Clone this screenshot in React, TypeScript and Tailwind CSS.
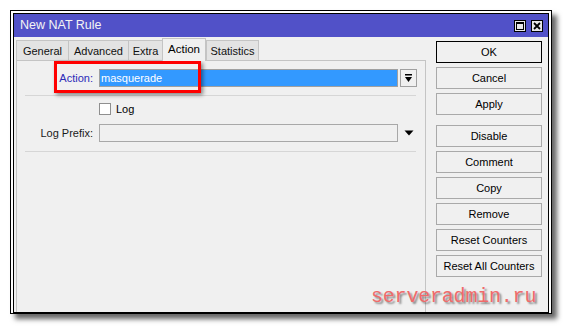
import React from "react";

const tabs = [
  { name: "General", w: 53 },
  { name: "Advanced", w: 61 },
  { name: "Extra", w: 35 },
  { name: "Action", w: 44, active: true },
  { name: "Statistics", w: 53 },
];

function Btn({ label, def, className = "" }: { label: string; def?: boolean; className?: string }) {
  return (
    <div
      className={
        "h-[22px] w-full flex items-center justify-center bg-[#f0f0f0] text-black " +
        (def ? "border border-black" : "border border-[#a9a9a9]") +
        " " +
        className
      }
    >
      {label}
    </div>
  );
}

export default function App() {
  return (
    <div
      className="relative w-[563px] h-[326px] bg-white overflow-hidden text-[11px] leading-none"
      style={{ fontFamily: '"Liberation Sans", Arial, sans-serif' }}
    >
      <div className="ml-[10px] mt-[10px] w-[542px] h-[304px] border border-black bg-white pt-[2px] px-[2px] flex flex-col shadow-[5px_5px_5px_rgba(0,0,0,0.6)]">
        <div className="flex-1 border border-black bg-[#f0f0f0] flex flex-col">
          {/* Title bar */}
          <div className="h-[23px] bg-[#5151c8] flex items-center pl-[6px] pr-[5px]">
            <span className="text-[#f4f4f4] text-[12.5px]">New NAT Rule</span>
            <div className="ml-auto flex gap-[5px]">
              <div className="w-[12px] h-[12px] border border-black bg-[#e8e8e8] flex items-center justify-center">
                <svg width="8" height="8" viewBox="0 0 8 8">
                  <rect x="0.5" y="0.5" width="7" height="7" fill="none" stroke="black" strokeWidth="1" />
                  <rect x="0" y="0" width="8" height="2" fill="black" />
                </svg>
              </div>
              <div className="w-[12px] h-[12px] border border-black bg-[#e8e8e8] flex items-center justify-center">
                <svg width="8" height="8" viewBox="0 0 8 8">
                  <path d="M1 1 L7 7 M7 1 L1 7" stroke="black" strokeWidth="1.8" />
                </svg>
              </div>
            </div>
          </div>
          {/* Body */}
          <div className="flex-1 flex">
            <div className="w-[412px] pl-[2px] flex flex-col">
              <div className="h-[23px] flex items-end">
                {tabs.map((t) =>
                  t.active ? (
                    <div
                      key={t.name}
                      style={{ width: t.w }}
                      className="h-[23px] -mb-px relative z-10 bg-[#f0f0f0] border-l border-r border-t border-[#c4c4c4] flex items-center justify-center text-black text-[11.5px] pb-[1px]"
                    >
                      {t.name}
                    </div>
                  ) : (
                    <div
                      key={t.name}
                      style={{ width: t.w }}
                      className="h-[20px] bg-[#e3e3e3] border-l border-t border-r border-[#c4c4c4] -mr-px flex items-center justify-center text-[#111] text-[11px] pt-[2px]"
                    >
                      {t.name}
                    </div>
                  )
                )}
              </div>
              <div className="flex-1 border-l border-t border-r border-[#c4c4c4] flex flex-col pt-[8px]">
                {/* Action row */}
                <div className="h-[18px] flex items-center">
                  <div className="w-[76px] text-right text-[#2b2bb8]">Action:</div>
                  <div className="ml-[6px] w-[299px] h-[18px] bg-[#3399ff] border border-[#a0a0a0] flex items-center pl-[1px] text-white">
                    masquerade
                  </div>
                  <div className="ml-[2px] w-[17px] h-[18px] border border-[#a0a0a0] bg-[#f0f0f0] flex items-center justify-center">
                    <svg width="9" height="9" viewBox="0 0 9 9">
                      <rect x="1" y="0" width="7" height="1.5" fill="black" />
                      <path d="M1 3 L8 3 L4.5 8 Z" fill="black" />
                    </svg>
                  </div>
                </div>
                <div className="mt-[8px] ml-[8px] mr-[9px] h-px bg-[#d6d6d6]" />
                {/* Log */}
                <div className="mt-[7px] h-[12px] flex items-center">
                  <div className="ml-[82px] w-[12px] h-[12px] bg-white border border-[#8f8f8f]" />
                  <span className="ml-[5px] text-black">Log</span>
                </div>
                {/* Log Prefix */}
                <div className="mt-[9px] h-[18px] flex items-center">
                  <div className="w-[76px] text-right text-[#1a1a1a]">Log Prefix:</div>
                  <div className="ml-[6px] w-[299px] h-[18px] bg-[#f0f0f0] border border-[#a8a8a8]" />
                  <div className="ml-[2px] w-[17px] h-[18px] flex items-center justify-center">
                    <svg width="10" height="6" viewBox="0 0 10 6">
                      <path d="M0.5 0.5 L9.5 0.5 L5 5.5 Z" fill="black" />
                    </svg>
                  </div>
                </div>
                <div className="mt-[9px] ml-[8px] mr-[9px] h-px bg-[#d6d6d6]" />
              </div>
            </div>
            {/* Buttons */}
            <div className="ml-[10px] w-[106px] pt-[4px] flex flex-col">
              <Btn label="OK" def />
              <Btn label="Cancel" className="mt-[4px]" />
              <Btn label="Apply" className="mt-[4px]" />
              <Btn label="Disable" className="mt-[10px]" />
              <Btn label="Comment" className="mt-[4px]" />
              <Btn label="Copy" className="mt-[4px]" />
              <Btn label="Remove" className="mt-[4px]" />
              <Btn label="Reset Counters" className="mt-[4px]" />
              <Btn label="Reset All Counters" className="mt-[4px]" />
            </div>
          </div>
        </div>
      </div>

      {/* Red highlight box */}
      <div className="absolute left-[54px] top-[61px] w-[147px] h-[32px] border-[3px] border-[#ff0000] shadow-[2px_2px_4px_rgba(0,0,0,0.45)]" />

      {/* Watermark */}
      <div
        className="absolute left-[371px] top-[287px] text-[20px] leading-none text-[#f06a6a] tracking-[-0.2px]"
        style={{ fontFamily: '"Liberation Mono", "Courier New", monospace', textShadow: "2px 2px 2px rgba(0,0,0,0.45)" }}
      >
        serveradmin.ru
      </div>
    </div>
  );
}
